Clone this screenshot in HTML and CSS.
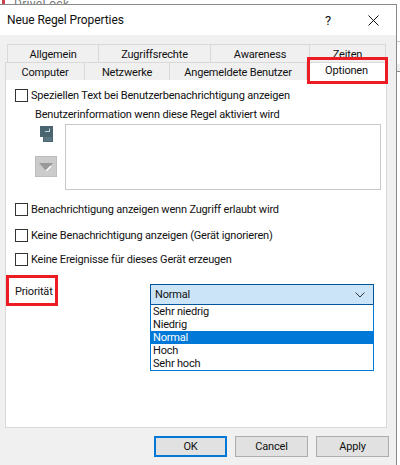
FILE: index.html
```html
<!DOCTYPE html>
<html lang="de">
<head>
  <meta charset="UTF-8" />
  <title>Neue Regel Properties</title>
  <link rel="stylesheet" href="styles.css">
</head>
<body>
  <div class="backdrop"><span class="backdrop-icon"></span><span class="backdrop-title">DriveLock</span></div>
  <div class="dialog">
    <div class="titlebar">
      <span class="title">Neue Regel Properties</span>
      <span class="help">?</span>
      <svg class="close" width="11" height="11" viewBox="0 0 11 11"><path d="M0.5 0.5L10.5 10.5M10.5 0.5L0.5 10.5" stroke="#111" fill="none"/></svg>
    </div>
    <div class="body">
      <div class="tabs tabs-back">
        <div class="tab t-allgemein">Allgemein</div>
        <div class="tab t-zugriff">Zugriffsrechte</div>
        <div class="tab t-awareness">Awareness</div>
        <div class="tab t-zeiten">Zeiten</div>
      </div>
      <div class="tabs tabs-front">
        <div class="tab t-computer">Computer</div>
        <div class="tab t-netzwerke">Netzwerke</div>
        <div class="tab t-benutzer">Angemeldete Benutzer</div>
        <div class="tab tab-active">Optionen</div>
      </div>
      <div class="panel">
        <label class="check check-first"><span class="box"></span>Speziellen Text bei Benutzerbenachrichtigung anzeigen</label>
        <div class="info-label">Benutzerinformation wenn diese Regel aktiviert wird</div>
        <div class="info-row">
          <div class="info-tools">
            <svg class="note-icon" width="14" height="16" viewBox="0 0 14 16"><path d="M1 0H14V16H4V11H1Z" fill="#4a6570"/><path d="M5 11H13V15H5Z" fill="#5b7681"/><path d="M6 5H10V2.5H11V6H6Z" fill="#c8d2d6"/></svg>
            <div class="arrow-btn">
              <svg width="14" height="8" viewBox="0 0 14 8"><path d="M0 0H14L7 8Z" fill="#999"/><path d="M7 8L12 3" stroke="#fff" stroke-width="1.5"/></svg>
            </div>
          </div>
          <div class="info-text"></div>
        </div>
        <label class="check check-second"><span class="box"></span>Benachrichtigung anzeigen wenn Zugriff erlaubt wird</label>
        <label class="check check-third"><span class="box"></span>Keine Benachrichtigung anzeigen (Gerät ignorieren)</label>
        <label class="check check-fourth"><span class="box"></span>Keine Ereignisse für dieses Gerät erzeugen</label>
        <div class="priority-row">
          <span class="priority-label">Priorität</span>
          <div class="combo">
            <div class="combo-head">
              <span>Normal</span>
              <svg width="10" height="6" viewBox="0 0 10 6"><path d="M0.5 0.5L5 5L9.5 0.5" stroke="#333" fill="none"/></svg>
            </div>
            <ul class="combo-list">
              <li>Sehr niedrig</li>
              <li>Niedrig</li>
              <li class="selected">Normal</li>
              <li>Hoch</li>
              <li>Sehr hoch</li>
            </ul>
          </div>
        </div>
      </div>
      <div class="buttons">
        <button class="btn btn-default">OK</button>
        <button class="btn">Cancel</button>
        <button class="btn">Apply</button>
      </div>
    </div>
  </div>
  <div class="mark mark-tab"></div>
  <div class="mark mark-prio"></div>
  <div class="behind behind-line"></div>
  <div class="behind behind-box"></div>
</body>
</html>
```

FILE: styles.css
```css
html, body {
  margin: 0;
  padding: 0;
  width: 400px;
  height: 465px;
  overflow: hidden;
  background: #fff;
  font-family: Roboto, "Liberation Sans", sans-serif;
  font-size: 11px;
  letter-spacing: -0.18px;
  color: #111;
}

.backdrop {
  position: relative;
  height: 4px;
  overflow: hidden;
  padding-left: 14px;
}

.backdrop-icon {
  position: absolute;
  left: 2px;
  top: 0;
  width: 3px;
  height: 4px;
  background: #c8434b;
}

.backdrop-title {
  display: block;
  margin-top: -3px;
  font-size: 12px;
  line-height: 14px;
  letter-spacing: 0.3px;
  color: #777;
}

.dialog {
  width: 397px;
  height: 461px;
  box-sizing: border-box;
  border-top: 1px solid #8a8a8a;
  border-right: 1px solid #8a8a8a;
}

.titlebar {
  height: 30px;
  display: flex;
  align-items: center;
  padding-left: 7px;
  background: #fff;
}

.title {
  font-size: 12px;
  letter-spacing: -0.1px;
  flex: 1;
}

.help {
  font-size: 13px;
  margin-right: 37px;
}

.close {
  margin-right: 17px;
}

.body {
  height: 430px;
  background: #f0f0f0;
  padding: 9px 0 0 5px;
  box-sizing: border-box;
}

.tabs {
  display: flex;
  height: 18px;
}

.tabs-back {
  margin-left: 2px;
}

.tab {
  box-sizing: border-box;
  height: 18px;
  line-height: 19px;
  text-align: center;
  background: #f0f0f0;
  border: 1px solid #d9d9d9;
  border-left: 0;
  border-bottom: 0;
}

.tabs .tab:first-child {
  border-left: 1px solid #d9d9d9;
}

.t-allgemein { width: 92px; }
.t-zugriff { width: 112px; }
.t-awareness { width: 99px; }
.t-zeiten { width: 76px; }
.t-computer { width: 80px; }
.t-netzwerke { width: 85px; }
.t-benutzer { width: 137px; }

.tab-active {
  width: 80px;
  background: #fff;
  line-height: 16px;
}

.panel {
  position: relative;
  width: 382px;
  height: 348px;
  box-sizing: border-box;
  background: #fff;
  border: 1px solid #d9d9d9;
  border-top: 0;
  padding-left: 9px;
}

.check {
  display: flex;
  align-items: center;
  height: 16px;
  white-space: nowrap;
}

.box {
  width: 11px;
  height: 11px;
  margin-right: 3px;
  border: 1px solid #333;
  background: #fff;
}

.check-first { padding-top: 7px; }
.check-second { margin-top: 11px; }
.check-third { margin-top: 10px; }
.check-fourth { margin-top: 8px; }

.info-label {
  margin: 4px 0 0 20px;
  height: 16px;
  line-height: 16px;
}

.info-row {
  display: flex;
  margin-top: 1px;
}

.info-tools {
  width: 50px;
  padding: 2px 0 0 20px;
  box-sizing: border-box;
}

.note-icon {
  display: block;
  margin-left: 4px;
}

.arrow-btn {
  width: 22px;
  height: 21px;
  margin-top: 14px;
  box-sizing: border-box;
  display: flex;
  align-items: center;
  justify-content: center;
  background: #cbcbcb;
  border: 1px solid #bdbdbd;
}

.info-text {
  width: 316px;
  height: 66px;
  box-sizing: border-box;
  background: #fff;
  border: 1px solid #c8c8c8;
}

.priority-row {
  display: flex;
  margin-top: 16px;
}

.priority-label {
  width: 135px;
  line-height: 16px;
  margin-top: 1px;
}

.combo {
  position: relative;
  width: 224px;
  margin-top: 1px;
}

.combo-head {
  display: flex;
  align-items: center;
  justify-content: space-between;
  height: 21px;
  box-sizing: border-box;
  padding: 0 8px 0 4px;
  background: #cce4f7;
  border: 1px solid #005499;
}

.combo-list {
  position: absolute;
  top: 21px;
  left: 0;
  right: 0;
  margin: 0;
  padding: 0;
  list-style: none;
  background: #fff;
  border: 1px solid #0078d7;
  border-top: 0;
}

.combo-list li {
  height: 13px;
  line-height: 13px;
  padding-left: 2px;
}

.combo-list .selected {
  background: #0078d7;
  color: #fff;
}

.buttons {
  display: flex;
  gap: 8px;
  margin: 8px 0 0 149px;
}

.btn {
  width: 73px;
  height: 21px;
  padding: 0;
  box-sizing: border-box;
  background: #e1e1e1;
  border: 1px solid #adadad;
  border-radius: 0;
  font: inherit;
  letter-spacing: inherit;
  color: #111;
}

.btn-default {
  border: 2px solid #0078d7;
}

.mark {
  position: absolute;
  box-sizing: border-box;
  border: 3px solid #ed1c24;
}

.mark-tab {
  left: 307px;
  top: 57px;
  width: 81px;
  height: 27px;
}

.mark-prio {
  left: 6px;
  top: 275px;
  width: 52px;
  height: 31px;
}

.behind {
  position: absolute;
  left: 397px;
  width: 3px;
  box-sizing: border-box;
}

.behind-line {
  top: 41px;
  height: 1px;
  background: #c4c4c4;
}

.behind-box {
  top: 64px;
  height: 8px;
  background: #f0f0f0;
  border-bottom: 1px solid #8a8a8a;
}
```
